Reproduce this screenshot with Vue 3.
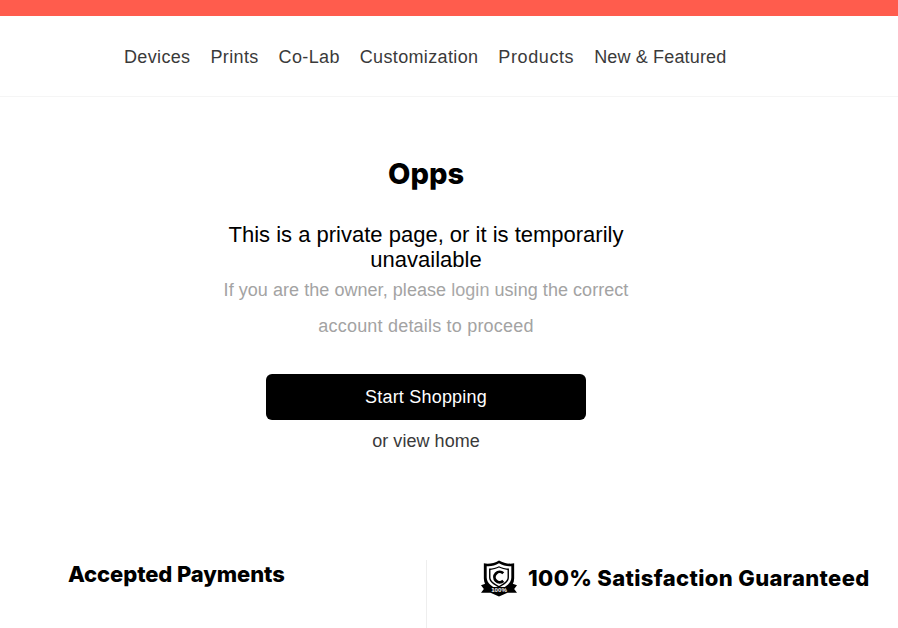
<script setup>
const links = ['Devices', 'Prints', 'Co-Lab', 'Customization', 'Products', 'New & Featured']
</script>

<template>
  <div class="page">
    <div class="topbar"></div>
    <nav class="nav">
      <a v-for="l in links" :key="l" class="link">{{ l }}</a>
    </nav>
    <main class="main">
      <h1 class="title">Opps</h1>
      <h2 class="sub">This is a private page, or it is temporarily unavailable</h2>
      <p class="note">If you are the owner, please <a class="login">login</a> using the correct <span class="note-end">account details to proceed</span></p>
      <a class="btn">Start Shopping</a>
      <a class="home">or view home</a>
    </main>
    <footer class="foot">
      <div class="pay"><h3 class="pay-title">Accepted Payments</h3></div>
      <div class="sat">
        <svg class="badge" width="36" height="37" viewBox="0 0 38 38">
          <path d="M19 0 C14 3 8 4 3 3 L3 19 C3 27 10 32 19 36 C28 32 35 27 35 19 L35 3 C30 4 24 3 19 0Z" fill="#000"/>
          <path d="M19 3 C15 5.500 10 6.500 6 6 L6 18 C6 24 12 28 19 31.500 C26 28 32 24 32 18 L32 6 C28 6.500 23 5.500 19 3Z" fill="#fff"/>
          <path d="M19 6 C16 7.500 12 8.500 8.500 8.500 L8.500 18 C8.500 22.500 13 25.500 19 28.500 C25 25.500 29.500 22.500 29.500 18 L29.500 8.500 C26 8.500 22 7.500 19 6Z" fill="#000"/>
          <path d="M19 7.500 C16.500 8.800 13 9.800 10 9.900 L10 18 C10 21.500 14 24.300 19 26.800 C24 24.300 28 21.500 28 18 L28 9.900 C25 9.800 21.500 8.800 19 7.500Z" fill="#fff"/>
          <path d="M23.500 13.500 A5.500 5.500 0 1 0 23.500 21.500" fill="none" stroke="#000" stroke-width="3"/>
          <path d="M0 26 L6 24 L9 28 L29 28 L32 24 L38 26 L35 30 L38 34 L28 34 L19 38 L10 34 L0 34 L3 30Z" fill="#000"/>
          <text x="19" y="33.500" text-anchor="middle" class="badge-text">100%</text>
        </svg>
        <span class="sat-title">100% Satisfaction Guaranteed</span>
      </div>
    </footer>
  </div>
</template>

<style scoped>
.page { width: 898px; height: 628px; overflow: hidden; background: #fff; font-family: "Liberation Sans", Arial, sans-serif; }
.topbar { height: 16px; background: #ff5c4d; }
.nav { height: 81px; border-bottom: 1px solid #f5f5f5; display: flex; align-items: center; gap: 20px; padding: 2px 0 0 124px; box-sizing: border-box; }
.link { font-size: 18px; letter-spacing: 0.35px; color: #3a3a3a; }
.link:nth-child(5) { letter-spacing: 0.6px; }
.link:nth-child(6) { letter-spacing: 0.15px; }
.main { width: 420px; margin-left: 216px; display: flex; flex-direction: column; align-items: center; text-align: center; }
.title { margin: 59px 0 0; font-family: Inter, sans-serif; font-weight: 800; font-size: 29px; line-height: 36px; color: #000; }
.sub { margin: 30px 0 0; width: 410px; font-weight: 400; font-size: 22px; line-height: 25px; color: #000; }
.note { margin: 0; width: 420px; font-size: 18px; line-height: 36px; letter-spacing: 0.05px; color: #a3a3a3; }
.note-end { letter-spacing: 0.2px; }
.login { color: #a9a9a9; }
.btn { margin-top: 30px; width: 320px; height: 46px; border-radius: 6px; background: #000; color: #fff; font-size: 18px; letter-spacing: 0.2px; display: flex; align-items: center; justify-content: center; }
.home { margin-top: 10px; font-size: 18px; line-height: 22px; letter-spacing: 0.05px; color: #3a3a3a; }
.foot { margin-top: 108px; display: flex; height: 68px; }
.pay { width: 427px; box-sizing: border-box; padding-left: 68px; border-right: 1px solid #eee; }
.pay-title { margin: 0; font-family: Inter, sans-serif; font-weight: 800; font-size: 22px; letter-spacing: -0.1px; line-height: 28px; color: #000; }
.sat { display: flex; align-items: flex-start; gap: 11px; padding-left: 54px; }
.badge { flex: none; }
.badge-text { font-family: "Liberation Sans", sans-serif; font-size: 6.500px; font-weight: 700; fill: #fff; }
.sat-title { font-family: Inter, sans-serif; font-weight: 800; font-size: 22px; letter-spacing: 0.35px; line-height: 36px; color: #000; white-space: nowrap; }
</style>
